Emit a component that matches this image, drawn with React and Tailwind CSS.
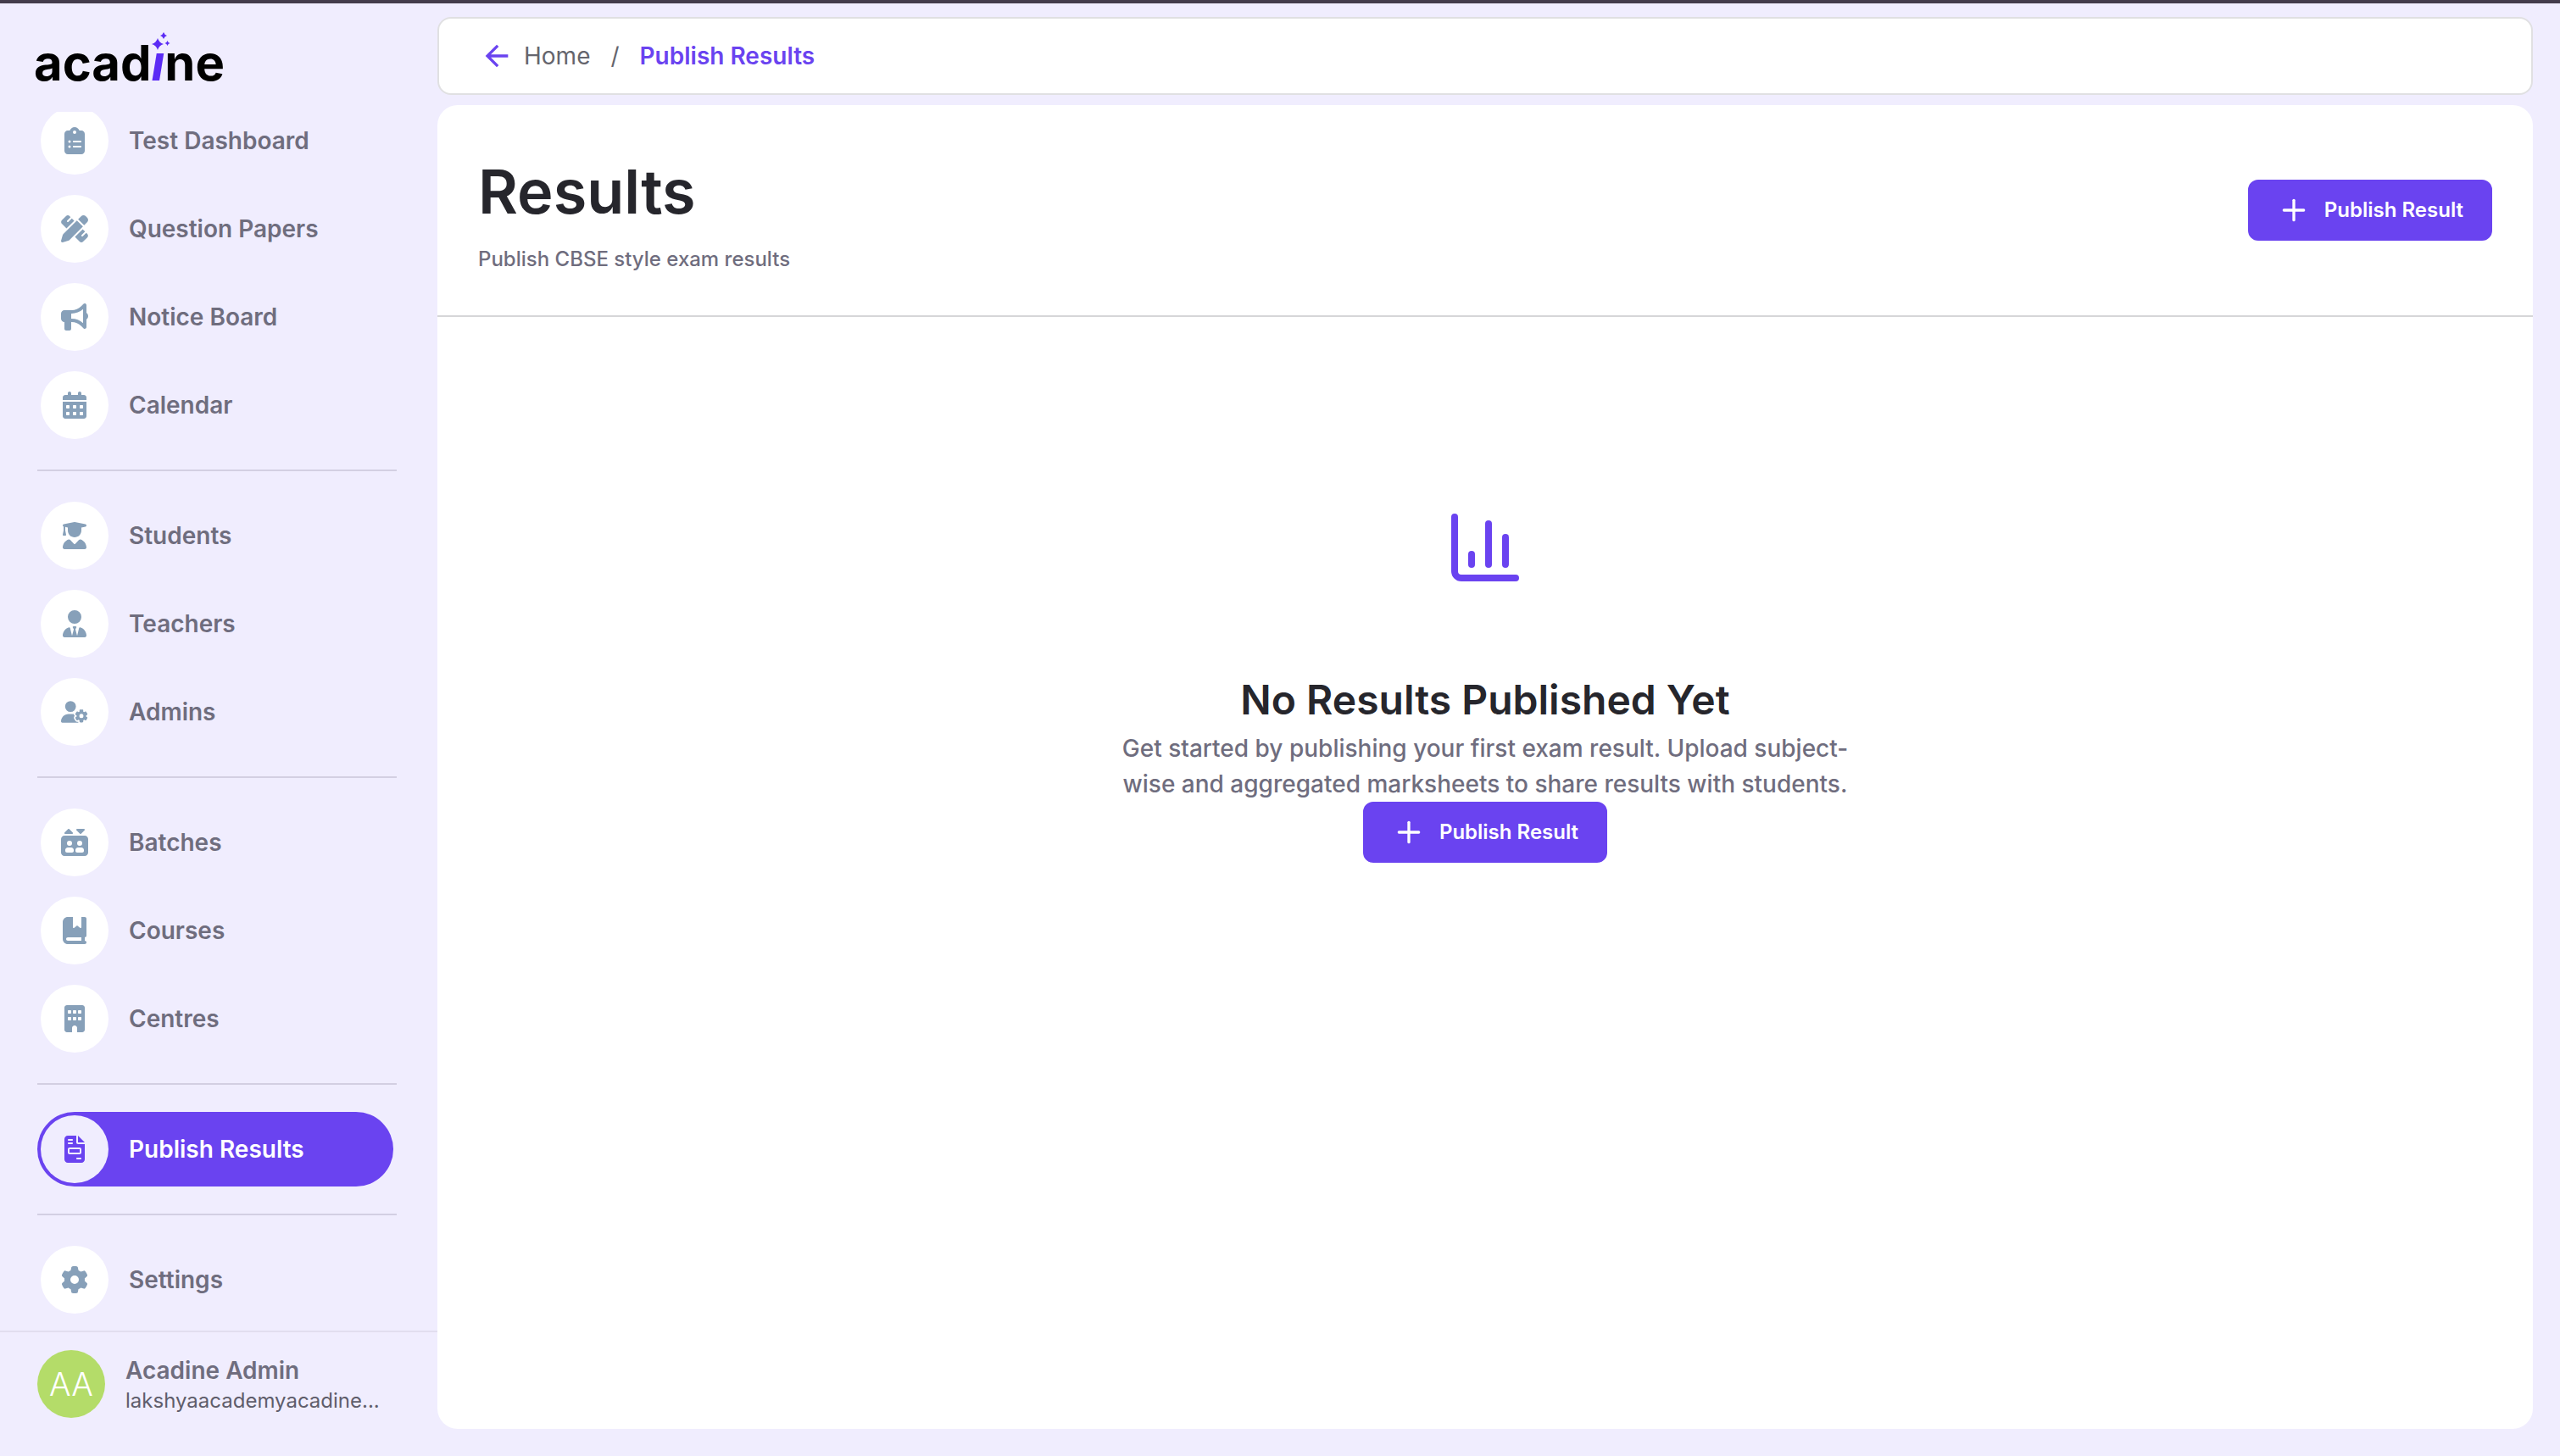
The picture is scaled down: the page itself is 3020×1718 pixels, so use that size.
import { clsx } from 'clsx';
import { ChartColumn, Plus } from 'lucide-react';
import {
  FaBookBookmark,
  FaBuilding,
  FaBullhorn,
  FaCalendarDays,
  FaClipboardList,
  FaElevator,
  FaFileInvoice,
  FaGear,
  FaPenRuler,
  FaUserGear,
  FaUserGraduate,
  FaUserTie
} from 'react-icons/fa6';
import { MdArrowBack } from 'react-icons/md';

// Each group is separated by a divider in the sidebar
const navGroups = [
  [
    { label: 'Test Dashboard', icon: FaClipboardList },
    { label: 'Question Papers', icon: FaPenRuler },
    { label: 'Notice Board', icon: FaBullhorn },
    { label: 'Calendar', icon: FaCalendarDays }
  ],
  [
    { label: 'Students', icon: FaUserGraduate },
    { label: 'Teachers', icon: FaUserTie },
    { label: 'Admins', icon: FaUserGear }
  ],
  [
    { label: 'Batches', icon: FaElevator },
    { label: 'Courses', icon: FaBookBookmark },
    { label: 'Centres', icon: FaBuilding }
  ],
  [{ label: 'Publish Results', icon: FaFileInvoice, active: true }],
  [{ label: 'Settings', icon: FaGear }]
];

function Logo() {
  return (
    <a
      href="#"
      className="relative flex text-[58px] leading-[72px] font-bold text-black"
    >
      <span>acad</span>
      <span className="text-[#5b2bf5] italic">ı</span>
      <span>ne</span>
      <svg
        viewBox="0 0 22 22"
        className="absolute top-0 left-[139px] h-[22px] w-[22px] fill-[#5b2bf5]"
      >
        <path d="M7 7Q8.6 12.4 14 14Q8.6 15.6 7 21Q5.4 15.6 0 14Q5.4 12.4 7 7Z" />
        <path d="M14 0Q15 3 18 4Q15 5 14 8Q13 5 10 4Q13 3 14 0Z" />
        <path d="M18.5 10Q19.2 12.3 21.500 13Q19.200 13.700 18.500 16Q17.800 13.700 15.500 13Q17.800 12.300 18.500 10Z" />
      </svg>
    </a>
  );
}

function NavItem({ label, icon: Icon, active = false }) {
  return (
    <a
      href="#"
      aria-current={active ? 'page' : undefined}
      className={clsx(
        'mr-1 flex items-center gap-6 rounded-full p-1 text-[28px] leading-10 font-semibold',
        active ? 'bg-[#6a43f0] text-white' : 'text-[#6f6d7e]'
      )}
    >
      <span
        className={clsx(
          'flex size-20 shrink-0 items-center justify-center rounded-full',
          active ? 'bg-[#f0edfe] text-[#6a43f0]' : 'bg-white text-[#87a0b9]'
        )}
      >
        <Icon className="size-8" />
      </span>
      {label}
    </a>
  );
}

function Sidebar() {
  return (
    <aside className="flex w-[516px] shrink-0 flex-col">
      <div className="flex h-32 shrink-0 items-start px-10 pt-[34px]">
        <Logo />
      </div>

      <nav className="min-h-0 flex-1 overflow-hidden pr-12 pl-11">
        <div className="-mt-[10px] flex flex-col gap-8">
          {navGroups.map((group, index) => (
            <div key={group[0].label} className="flex flex-col gap-8">
              {index > 0 && <hr className="border-t-2 border-[#d3cfe2]" />}
              <div className="flex flex-col gap-4">
                {group.map((item) => (
                  <NavItem key={item.label} {...item} />
                ))}
              </div>
            </div>
          ))}
        </div>
      </nav>

      {/* Signed in user */}
      <div className="flex h-[148px] shrink-0 items-start gap-6 border-t-2 border-[#e2deef] px-11 pt-[21px]">
        <div className="flex size-20 shrink-0 items-center justify-center rounded-full bg-[#b4dc69] text-[38px] font-light text-white">
          AA
        </div>
        <div className="min-w-0 pt-1">
          <div className="text-[28px] leading-10 font-semibold text-[#6f6d7e]">
            Acadine Admin
          </div>
          <div className="text-2xl leading-8 text-[#5f5d6b]">
            lakshyaacademyacadine...
          </div>
        </div>
      </div>
    </aside>
  );
}

function PublishButton() {
  return (
    <button
      type="button"
      className="flex h-[72px] items-center gap-4 rounded-xl border-2 border-[#6a43f0] bg-[#6a43f0] px-8 text-2xl font-semibold text-white"
    >
      <Plus className="size-10" />
      Publish Result
    </button>
  );
}

function Breadcrumb() {
  return (
    <nav className="flex h-[92px] shrink-0 items-center rounded-2xl border-2 border-[#e0e0e2] bg-white px-12 text-[28px] leading-10">
      <a href="#" className="flex items-center gap-3 text-[#65656d]">
        <MdArrowBack className="size-10 text-[#6a43f0]" />
        Home
      </a>
      <span className="px-6 text-[#65656d]">/</span>
      <a href="#" aria-current="page" className="font-semibold text-[#6a43f0]">
        Publish Results
      </a>
    </nav>
  );
}

function EmptyState() {
  return (
    <div className="flex flex-col items-center pt-56 text-center">
      <ChartColumn className="mb-24 size-24 text-[#6a43f0]" />
      <h2 className="text-5xl leading-[72px] font-semibold text-[#26262c]">
        No Results Published Yet
      </h2>
      <p className="max-w-4xl text-[28px] leading-[42px] font-medium text-[#6f6d7e]">
        Get started by publishing your first exam result. Upload subject-wise
        and aggregated marksheets to share results with students.
      </p>
      <PublishButton />
    </div>
  );
}

export default function App() {
  return (
    <div className="flex h-screen border-t-4 border-[#443c4c] bg-[#f0edfe] font-[Inter,sans-serif]">
      <Sidebar />

      <main className="flex min-w-0 flex-1 flex-col gap-3 pt-4 pr-8 pb-8">
        <Breadcrumb />

        <section className="flex-1 rounded-3xl bg-white">
          <header className="flex items-center justify-between border-b-2 border-[#d6d6d8] p-12">
            <div className="flex flex-col gap-2">
              <h1 className="text-7xl leading-[108px] font-semibold text-[#26262c]">
                Results
              </h1>
              <p className="text-2xl leading-9 font-medium text-[#6f6d7e]">
                Publish CBSE style exam results
              </p>
            </div>
            <PublishButton />
          </header>
          <EmptyState />
        </section>
      </main>
    </div>
  );
}
